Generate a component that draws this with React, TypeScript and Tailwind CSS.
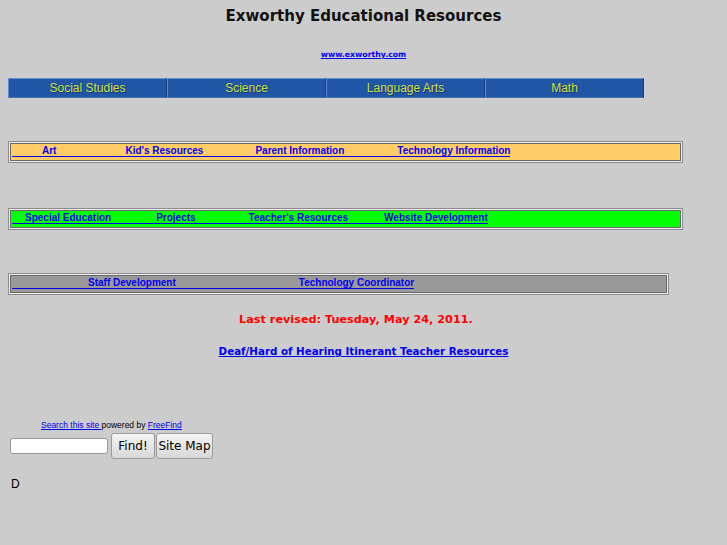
import React from "react";

const linkCls = "text-[#0000ee] font-bold";

function Frame({ width, bg, children }: { width: string; bg: string; children: React.ReactNode }) {
  return (
    <div className={`${width} border border-[#8c8c8c]`}>
      <div className="border border-[#ececec]">
        <div className={`border border-[#6a6a6a] ${bg} h-[18px] pl-px flex items-start`}>
          {children}
        </div>
      </div>
    </div>
  );
}

function Row({ items }: { items: { t: string; ml: string }[] }) {
  return (
    <div className="inline-flex h-[12px] mt-px border-b border-[#0000ee] font-['Liberation_Sans',Arial,sans-serif] text-[10px] leading-[11px]">
      {items.map((it) => (
        <a key={it.t} href="#" className={`${linkCls} ${it.ml} whitespace-nowrap`}>
          {it.t}
        </a>
      ))}
    </div>
  );
}

export default function App() {
  return (
    <div className="min-h-[545px] bg-[#cccccc] px-2 pt-2 text-black font-['DejaVu_Sans',sans-serif]">
      <div className="h-[17px] text-center text-[15px] leading-[17px] font-bold text-[#111]">
        Exworthy Educational Resources
      </div>
      <div className="mt-[24px] h-[12px] text-center text-[7.8px] leading-[12px] font-bold">
        <a href="#" className="text-[#0000ee] underline">www.exworthy.com</a>
      </div>

      <div className="mt-[17px] w-[636px] grid grid-cols-4 h-[18px]">
        {["Social Studies", "Science", "Language Arts", "Math"].map((t) => (
          <div
            key={t}
            className="bg-[#2156a6] border-t border-l border-t-[#5f8fd2] border-l-[#5a8ad0] border-r border-r-[#163e7e] border-b border-b-[#4a6fa8] flex items-center justify-center font-['Liberation_Sans',Arial,sans-serif] text-[12px] text-[#cbe03a] [text-shadow:1px_1px_0_#1a3a70]"
          >
            {t}
          </div>
        ))}
      </div>

      <div className="mt-[45px]">
        <Frame width="w-[675px]" bg="bg-[#ffcc66]">
          <Row
            items={[
              { t: "Art", ml: "ml-[30px]" },
              { t: "Kid's Resources", ml: "ml-[69px]" },
              { t: "Parent Information", ml: "ml-[52px]" },
              { t: "Technology Information", ml: "ml-[53px]" },
            ]}
          />
        </Frame>
      </div>

      <div className="mt-[45px]">
        <Frame width="w-[675px]" bg="bg-[#00ff00]">
          <Row
            items={[
              { t: "Special Education", ml: "ml-[13px]" },
              { t: "Projects", ml: "ml-[45px]" },
              { t: "Teacher's Resources", ml: "ml-[53px]" },
              { t: "Website Development", ml: "ml-[36px]" },
            ]}
          />
        </Frame>
      </div>

      <div className="mt-[43px]">
        <Frame width="w-[661px]" bg="bg-[#999999]">
          <Row
            items={[
              { t: "Staff Development", ml: "ml-[76px]" },
              { t: "Technology Coordinator", ml: "ml-[123px]" },
            ]}
          />
        </Frame>
      </div>

      <div className="mt-[17px] h-[16px] text-center pr-[15px] text-[11.25px] leading-[16px] font-bold text-[#ff0000]">
        Last revised: Tuesday, May 24, 2011.
      </div>
      <div className="mt-[16px] h-[14px] text-center text-[10.3px] leading-[14px] font-bold">
        <a href="#" className="text-[#0000ee] underline">Deaf/Hard of Hearing Itinerant Teacher Resources</a>
      </div>

      <div className="mt-[62px] pl-[33px] h-[11px] text-[8.5px] leading-[11px] font-['Liberation_Sans',Arial,sans-serif]">
        <a href="#" className="text-[#0000ee] underline">Search this site </a> powered by{" "}
        <a href="#" className="text-[#0000ee] underline">FreeFind</a>
      </div>
      <div className="mt-[2px] flex items-center pl-[2px] h-[26px]">
        <input className="w-[98px] h-[16px] bg-white border border-[#999] rounded-[3px] outline-none" />
        <button className="ml-[3px] w-[44px] h-[26px] rounded-[3px] border border-[#9a9a9a] bg-gradient-to-b from-[#f4f4f4] to-[#d8d8d8] text-[12px] text-black font-['DejaVu_Sans',sans-serif]">
          Find!
        </button>
        <button className="ml-[1px] w-[57px] h-[26px] rounded-[3px] border border-[#9a9a9a] bg-gradient-to-b from-[#f4f4f4] to-[#d8d8d8] text-[12px] text-black font-['DejaVu_Sans',sans-serif]">
          Site Map
        </button>
      </div>
      <div className="mt-[18px] pl-[3px] h-[14px] text-[12px] leading-[14px] font-['Liberation_Sans',Arial,sans-serif]">
        D
      </div>
    </div>
  );
}
